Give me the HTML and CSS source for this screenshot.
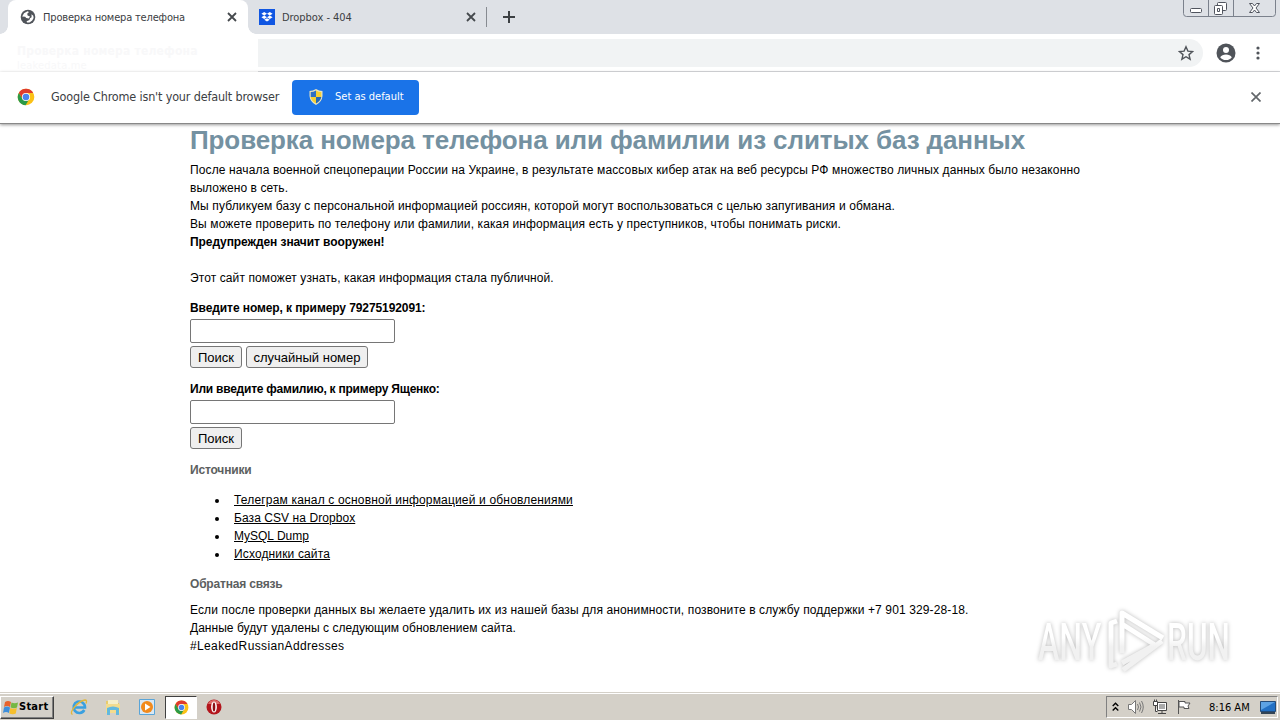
FILE: index.html
```html
<!DOCTYPE html>
<html lang="ru">
<head>
<meta charset="utf-8">
<title>Проверка номера телефона</title>
<link rel="stylesheet" href="styles.css">
</head>
<body>
<div class="browser">
  <header class="tabstrip">
    <div class="tab tab-active">
      <svg class="globe" width="16" height="16" viewBox="0 0 16 16"><circle cx="8" cy="8" r="7.3" fill="#50545a"/><path d="M2.2 7.500 4 4.200 7.500 2.300l1.500.8-1.800 1.700.4 1.600 2.400 1.200-1.200 1.800-2.600-.3-1-1.400z" fill="#fff"/><path d="M11.500 5.200l1.800 1.500.3 2.200-1.400 2.500-2.700 2-2.500.2-.4-1.300 2.800-1.200.6-1.800 1.600-1z" fill="#fff"/></svg>
      <span class="tab-title t-check">Проверка номера телефона</span>
      <svg class="x" width="10" height="10" viewBox="0 0 10 10"><path d="M1 1l8 8M9 1L1 9"/></svg>
    </div>
    <div class="tab tab-idle">
      <svg width="16" height="16" viewBox="0 0 16 16"><path fill="#1056e2" d="M0 0h16v16H0z"/><path fill="#fff" d="M5.200 3 8 4.700 5.200 6.400 2.400 4.700zM10.800 3l2.800 1.700-2.800 1.700L8 4.700zM5.200 6.600 8 8.300 5.200 10 2.400 8.300zM10.800 6.600l2.800 1.700-2.800 1.700L8 8.300zM5.200 10.800 8 9.200l2.800 1.600L8 12.600z"/></svg>
      <span class="tab-title t-drop">Dropbox - 404</span>
      <svg class="x" width="10" height="10" viewBox="0 0 10 10"><path d="M1 1l8 8M9 1L1 9"/></svg>
    </div>
    <i class="tab-sep"></i>
    <svg class="plus" width="12" height="12" viewBox="0 0 12 12"><path d="M6 0v12M0 6h12"/></svg>
    <div class="wincontrols">
      <svg width="93" height="17" viewBox="0 0 93 17" fill="none"><path d="M.5 0v13.500q0 3 3 3h86q3 0 3-3V0M25.500 0v16M50.500 0v16" stroke="#7b818c"/><rect x="7.500" y="8.500" width="11" height="4" rx="1" fill="#fff" stroke="#50545e"/><rect x="34.500" y="2.500" width="9" height="8" rx="1" fill="#fff" stroke="#50545e"/><rect x="31.500" y="5.500" width="8" height="9" rx="1" fill="#fff" stroke="#50545e"/><path d="M34.500 8.500h2v3h-2z" stroke="#50545e"/><path d="M66.500 3.500h3l2 2.500 2-2.500h3l-3.500 4.500 3.500 4.500h-3l-2-2.500-2 2.500h-3L70 8z" fill="#fff" stroke="#50545e"/></svg>
    </div>
  </header>
  <div class="toolbar">
    <div class="omnibox">
      <svg width="16" height="16" viewBox="0 0 16 16"><path d="M8 1.800l1.900 4.300 4.700.4-3.600 3.100 1.100 4.600L8 11.700l-4.100 2.500L5 9.600 1.400 6.500l4.700-.4z" fill="none" stroke="#50545a" stroke-width="1.400"/></svg>
    </div>
    <svg class="avatar" width="20" height="20" viewBox="0 0 20 20"><circle cx="10" cy="10" r="9.500" fill="#50545a"/><circle cx="10" cy="7" r="3" fill="#fff"/><path d="M4.200 14.200Q6 11.500 10 11.500t5.800 2.700Q14 17 10 17t-5.800-2.800z" fill="#fff"/></svg>
    <svg class="dots" width="4" height="14" viewBox="0 0 4 14" fill="#50545a"><circle cx="2" cy="2" r="1.600"/><circle cx="2" cy="7" r="1.600"/><circle cx="2" cy="12" r="1.600"/></svg>
    <div class="hovercard"><b>Проверка номера телефона</b><span>leakedata.me</span></div>
  </div>
  <div class="infobar">
    <svg width="18" height="18" viewBox="0 0 18 18"><use href="#chrome"/></svg>
    <span class="info-text">Google Chrome isn't your default browser</span>
    <div class="default-btn">
      <svg width="14" height="16" viewBox="0 0 14 16"><path d="M7 0Q10 2 13.500 2v5Q13 13 7 16 1 13 .5 7V2Q4 2 7 0z" fill="#e8e3c0"/><path d="M7 1.500V8H1.700V3Q4.500 3 7 1.500z" fill="#2d6fc4"/><path d="M7 1.500V8h5.300V3Q9.500 3 7 1.500z" fill="#f5cf33"/><path d="M1.700 8H7v6.500Q2.500 12 1.700 8z" fill="#f5cf33"/><path d="M12.300 8H7v6.500Q11.500 12 12.300 8z" fill="#2668b5"/></svg>
      <span>Set as default</span>
    </div>
    <svg class="x info-x" width="10" height="10" viewBox="0 0 10 10"><path d="M.5.5l9 9M9.500.5l-9 9"/></svg>
  </div>
  <main class="page">
    <h1><span>Проверка номера телефона или фамилии из слитых баз данных</span></h1>
    <p class="intro"><span class="l1">После начала военной спецоперации России на Украине, в результате массовых кибер атак на веб ресурсы РФ множество личных данных было незаконно</span><br><span class="l2">выложено в сеть.</span><br><span class="l3">Мы публикуем базу с персональной информацией россиян, которой могут воспользоваться с целью запугивания и обмана.</span><br><span class="l4">Вы можете проверить по телефону или фамилии, какая информация есть у преступников, чтобы понимать риски.</span><br><b class="l5">Предупрежден значит вооружен!</b><br><br><span class="l6">Этот сайт поможет узнать, какая информация стала публичной.</span></p>
    <form class="search">
      <label><b class="l7">Введите номер, к примеру 79275192091:</b></label>
      <input type="text">
      <div class="buttons"><button type="button" class="find"><span>Поиск</span></button><button type="button" class="random"><span>случайный номер</span></button></div>
    </form>
    <form class="search">
      <label><b class="l8">Или введите фамилию, к примеру Ященко:</b></label>
      <input type="text">
      <div class="buttons"><button type="button" class="find"><span>Поиск</span></button></div>
    </form>
    <h2><span class="l9">Источники</span></h2>
    <ul>
      <li><a class="l10">Телеграм канал с основной информацией и обновлениями</a></li>
      <li><a class="l11">База CSV на Dropbox</a></li>
      <li><a class="l12">MySQL Dump</a></li>
      <li><a class="l13">Исходники сайта</a></li>
    </ul>
    <h2><span class="l14">Обратная связь</span></h2>
    <p class="contact"><span class="l15">Если после проверки данных вы желаете удалить их из нашей базы для анонимности, позвоните в службу поддержки +7 901 329-28-18.</span><br><span class="l16">Данные будут удалены с следующим обновлением сайта.</span><br><span class="l17">#LeakedRussianAddresses</span></p>
    <div class="watermark"><span class="any">ANY</span><svg width="62" height="66" viewBox="0 0 62 66" fill="none" stroke="url(#fade)" stroke-width="5" stroke-linejoin="round"><defs><linearGradient id="fade" gradientUnits="userSpaceOnUse" x1="0" y1="28" x2="0" y2="38"><stop stop-color="#fff"/><stop offset="1" stop-color="#f1f1f1"/></linearGradient></defs><path d="M17 44V4l41 25M17 15l33 21-33 18M12 12l-6 2v43l6-2M57 32 18 61"/></svg><span class="run">RUN</span></div>
  </main>
  <footer class="taskbar">
    <div class="start"><svg width="16" height="15" viewBox="0 0 16 15"><path d="M2 2q3-2 6 0L7 7Q4 5 1 7z" fill="#e8622c"/><path d="M8.500 2.500q3 1.500 6.500 0L14 7.500q-3 1.500-6.500 0z" fill="#75b843"/><path d="M1 7.500q3-2 6 0l-1 5.500Q3 11 0 13z" fill="#3d8edb"/><path d="M7.300 8q3 1.500 6.500 0l-1 5.500q-3 1.500-6.500 0z" fill="#f5bf2d"/></svg><b>Start</b></div>
    <svg class="ql ie" width="18" height="18" viewBox="0 0 18 18" fill="none"><path d="M14.300 12A5.700 5.700 0 1 1 15 9.500H5" stroke="#3aa0e0" stroke-width="2.600"/><path d="M2.500 16.500Q-.5 15 4.500 9T15 2q2.500 0 1 3.500" stroke="#e2b73a" stroke-width="1.300"/></svg>
    <svg class="ql" width="18" height="18" viewBox="0 0 18 18"><path d="M2 3h5l1 2h7v10H2z" fill="#e8cb6c"/><path d="M4 2h10v7H4z" fill="#f6efc8"/><path d="M2 6h14v9H2z" fill="#f3dc8d"/><path d="M3 10q6-3 12 0v7h-3v-5H6v5H3z" fill="#63b9de"/></svg>
    <svg class="ql" width="18" height="18" viewBox="0 0 18 18"><path d="M1.500 1.500h15v15h-15z" fill="#d9e8f4" stroke="#5aa5d8"/><circle cx="9" cy="9" r="6" fill="#f28a1c"/><path d="M7 5.500 12.500 9 7 12.500z" fill="#fff"/></svg>
    <div class="task-active"><svg width="15" height="15" viewBox="0 0 18 18"><g id="chrome"><circle cx="9" cy="9" r="8.300" fill="#fbc116"/><path d="M1.800 4.900A8.300 8.300 0 0 1 16.200 4.900H9L5.500 11z" fill="#df3b2e"/><path d="M1.800 4.900A8.300 8.300 0 0 0 8.600 17.300L12 11.500 9 13 5.500 11z" fill="#2b9a48"/><circle cx="9" cy="9" r="4.100" fill="#fff"/><circle cx="9" cy="9" r="3.300" fill="#4a83ee"/></g></svg></div>
    <svg class="ql opera" width="16" height="16" viewBox="0 0 16 16"><circle cx="8" cy="8" r="7.500" fill="#b3151c"/><path d="M2 5a6.500 6.500 0 0 1 12 0z" fill="#dc6a68"/><ellipse cx="8" cy="8" rx="2.900" ry="5.500" fill="#fff"/><ellipse cx="8" cy="8" rx="1.300" ry="4.500" fill="#8d1015"/></svg>
    <div class="tray">
      <svg width="7" height="10" viewBox="0 0 7 10" fill="none" stroke="#000" stroke-width="1.400"><path d="M.7 4l2.800-2.700L6.300 4M.7 8.500l2.800-2.700 2.800 2.700"/></svg>
      <svg width="17" height="16" viewBox="0 0 17 16" fill="none" stroke="#777"><path d="M1.500 5.500h3l4-4v13l-4-4h-3z" fill="#fff"/><path d="M10.500 5q2 3 0 6M12.500 3.500q3 4.500 0 9M14.500 2q3.500 6 0 12"/></svg>
      <svg width="16" height="16" viewBox="0 0 16 16" stroke="#444" fill="#fff"><path d="M5.500 3.500h9v8h-9z"/><path d="M7 5h6v5H7z" fill="#aaa" stroke="none"/><path d="M1.500 2.500h4v4h-4zM2.500.5v2M4.500.5v2M3.500 6.500v6h2M6 14.500h8M10 12v2"/></svg>
      <svg width="16" height="16" viewBox="0 0 16 16" stroke="#555" fill="#fff"><path d="M2.500 1v14M3 2.500h6v1.500h5l-2 3 1 2.500H8V8H3z"/></svg>
      <span class="clock">8:16 AM</span>
      <svg width="16" height="13" viewBox="0 0 16 13"><path d="M.5.500h15v10H.5z" fill="#2270c4" stroke="#234b79"/><path d="M1 1h14L1 9z" fill="#5ca2e4"/><path d="M1 11h14v2H1z" fill="#345"/></svg>
    </div>
  </footer>
</div>
</body>
</html>
```
FILE: styles.css
```css
* { box-sizing: border-box; }
body { margin: 0; background: #fff; font: 12px/18px "Liberation Sans", Arial, sans-serif; color: #000; }
svg { display: block; flex: none; }
.browser { width: 1280px; height: 720px; display: flex; flex-direction: column; overflow: hidden; }
.tabstrip { height: 34px; flex: none; background: #dee1e6; display: flex; align-items: center; padding-left: 8px; position: relative; }
.tab { height: 34px; display: flex; align-items: center; font: 11px/16px "DejaVu Sans Condensed", "DejaVu Sans", sans-serif; color: #3c4043; white-space: nowrap; }
.tab-active { width: 240px; background: #fff; border-radius: 8px 8px 0 0; padding: 0 11px 0 12px; position: relative; }
.tab-active::before, .tab-active::after { content: ""; position: absolute; bottom: 0; width: 8px; height: 8px; }
.tab-active::before { left: -8px; background: radial-gradient(circle at 0 0, transparent 7.5px, #fff 8px); }
.tab-active::after { right: -8px; background: radial-gradient(circle at 100% 0, transparent 7.5px, #fff 8px); }
.tab-title { margin-left: 7px; padding-top: 1px; }
.t-check { letter-spacing: -0.17px; }
.t-drop { letter-spacing: -0.05px; }
.x { margin-left: auto; fill: none; stroke: #45494d; stroke-width: 1.8; }
.tab-idle { width: 228px; padding-left: 11px; }
.tab-sep { width: 1px; height: 20px; background: #878b91; margin-left: 10px; }
.plus { margin-left: 16px; fill: none; stroke: #3c4043; stroke-width: 2; }
.wincontrols { position: absolute; right: 4px; top: 0; }
.toolbar { height: 38px; flex: none; display: flex; align-items: center; background: #fff; border-bottom: 1px solid #d5d7da; position: relative; }
.omnibox { width: 1203px; height: 28px; background: #f1f3f4; border-radius: 14px; display: flex; align-items: center; justify-content: flex-end; padding-right: 9px; }
.avatar { margin-left: 13px; }
.dots { margin-left: 20px; }
.hovercard { position: absolute; left: 0; top: 0; width: 258px; height: 38px; background: #fff; padding: 9px 0 0 17px; color: #f8f8f9; font: 12px/16px "DejaVu Sans Condensed", sans-serif; letter-spacing: 0.2px; display: flex; flex-direction: column; }
.hovercard span { font-size: 11px; line-height: 13px; }
.infobar { height: 52px; flex: none; display: flex; align-items: center; padding: 0 19px 1px 17px; border-bottom: 1px solid #888; box-shadow: 0 1px 3px #999; position: relative; background: #fff; }
.info-text { margin-left: 16px; width: 241px; white-space: nowrap; font: 12.5px/18px "DejaVu Sans Condensed", sans-serif; letter-spacing: -0.17px; color: #3c4043; }
.default-btn { width: 127px; height: 35px; background: #1a73e8; border-radius: 4px; display: flex; align-items: center; padding-left: 17px; color: #fff; font: 11px/16px "DejaVu Sans Condensed", sans-serif; gap: 12px; white-space: nowrap; }
.info-x { stroke: #63676b; stroke-width: 1.7; }
.page { flex: 1; padding: 0 190px; white-space: nowrap; position: relative; }
h1 { margin: 0; font-size: 26px; line-height: 32px; color: #7491a1; letter-spacing: -0.1px; }
p { margin: 0; }
.intro { margin-top: 5px; }
.search { display: flex; flex-direction: column; margin-top: 12px; }
input { width: 205px; height: 24px; border: 1px solid #767676; border-radius: 2px; padding: 0; margin-top: 2px; }
.buttons { display: flex; gap: 4px; margin-top: 3px; }
button { height: 22px; border: 1px solid #767676; border-radius: 3px; background: #efefef; padding: 1px 0 0; font: 13px/18px "Liberation Sans", sans-serif; color: #000; }
.find { width: 52px; }
.random { width: 122px; }
h2 { margin: 12px 0 0; font-size: 12px; line-height: 18px; color: #5c6060; }
ul { margin: 12px 0 0; padding-left: 39px; }
li { padding-left: 5px; }
a { text-decoration: underline; }
.contact { margin-top: 8px; }
.l1, .l3 { letter-spacing: 0.125px; }
.l2 { letter-spacing: 0.06px; }
.l4 { letter-spacing: 0.117px; }
.l5 { letter-spacing: -0.08px; }
.l6 { letter-spacing: 0.1px; }
.l7 { letter-spacing: -0.09px; }
.l8 { letter-spacing: -0.23px; }
.l9 { letter-spacing: -0.17px; }
.l10 { letter-spacing: 0.173px; }
.l11 { letter-spacing: 0.07px; }
.l13 { letter-spacing: 0.14px; }
.l14 { letter-spacing: -0.19px; }
.l15 { letter-spacing: 0.121px; }
.l16 { letter-spacing: 0.035px; }
.l17 { letter-spacing: 0.365px; }
.watermark { position: absolute; left: 1038px; top: 483px; display: flex; align-items: center; font: 500 51px/66px "Roboto", sans-serif; filter: drop-shadow(0 0 2px #bbb); }
.watermark span { padding-top: 3px; transform-origin: 0 50%; color: transparent; background: linear-gradient(#fff 45%, #f1f1f1 58%); -webkit-background-clip: text; background-clip: text; }
.watermark .any { width: 104px; margin-right: -37px; transform: scaleX(0.63); }
.watermark .run { width: 106px; margin-right: -42px; transform: scaleX(0.62); }
.taskbar { height: 28px; flex: none; background: #d4d0c8; border-top: 1px solid #d4d0c8; box-shadow: inset 0 1px #fff; display: flex; align-items: center; padding-top: 1px; }
.start { width: 54px; height: 23px; border: 1px solid; border-color: #fff #404040 #404040 #fff; box-shadow: inset -1px -1px #808080; display: flex; align-items: center; padding-left: 2px; font: 11px/16px "DejaVu Sans Condensed", sans-serif; letter-spacing: 0.25px; }
.ql { margin-left: 16px; }
.task-active { width: 32px; height: 23px; margin-left: 9px; border: 1px solid; border-color: #404040 #fff #fff #404040; background: #fff; display: flex; align-items: center; justify-content: center; }
.opera { margin-left: 9px; }
.tray { margin: 0 2px 0 auto; width: 172px; height: 22px; border: 1px solid; border-color: #808080 #fff #fff #808080; display: flex; align-items: center; padding-left: 5px; gap: 8px; }
.clock { margin: 0 2px 0 9px; padding-top: 1px; white-space: nowrap; font: 11px/16px "DejaVu Sans Condensed", sans-serif; }
```
